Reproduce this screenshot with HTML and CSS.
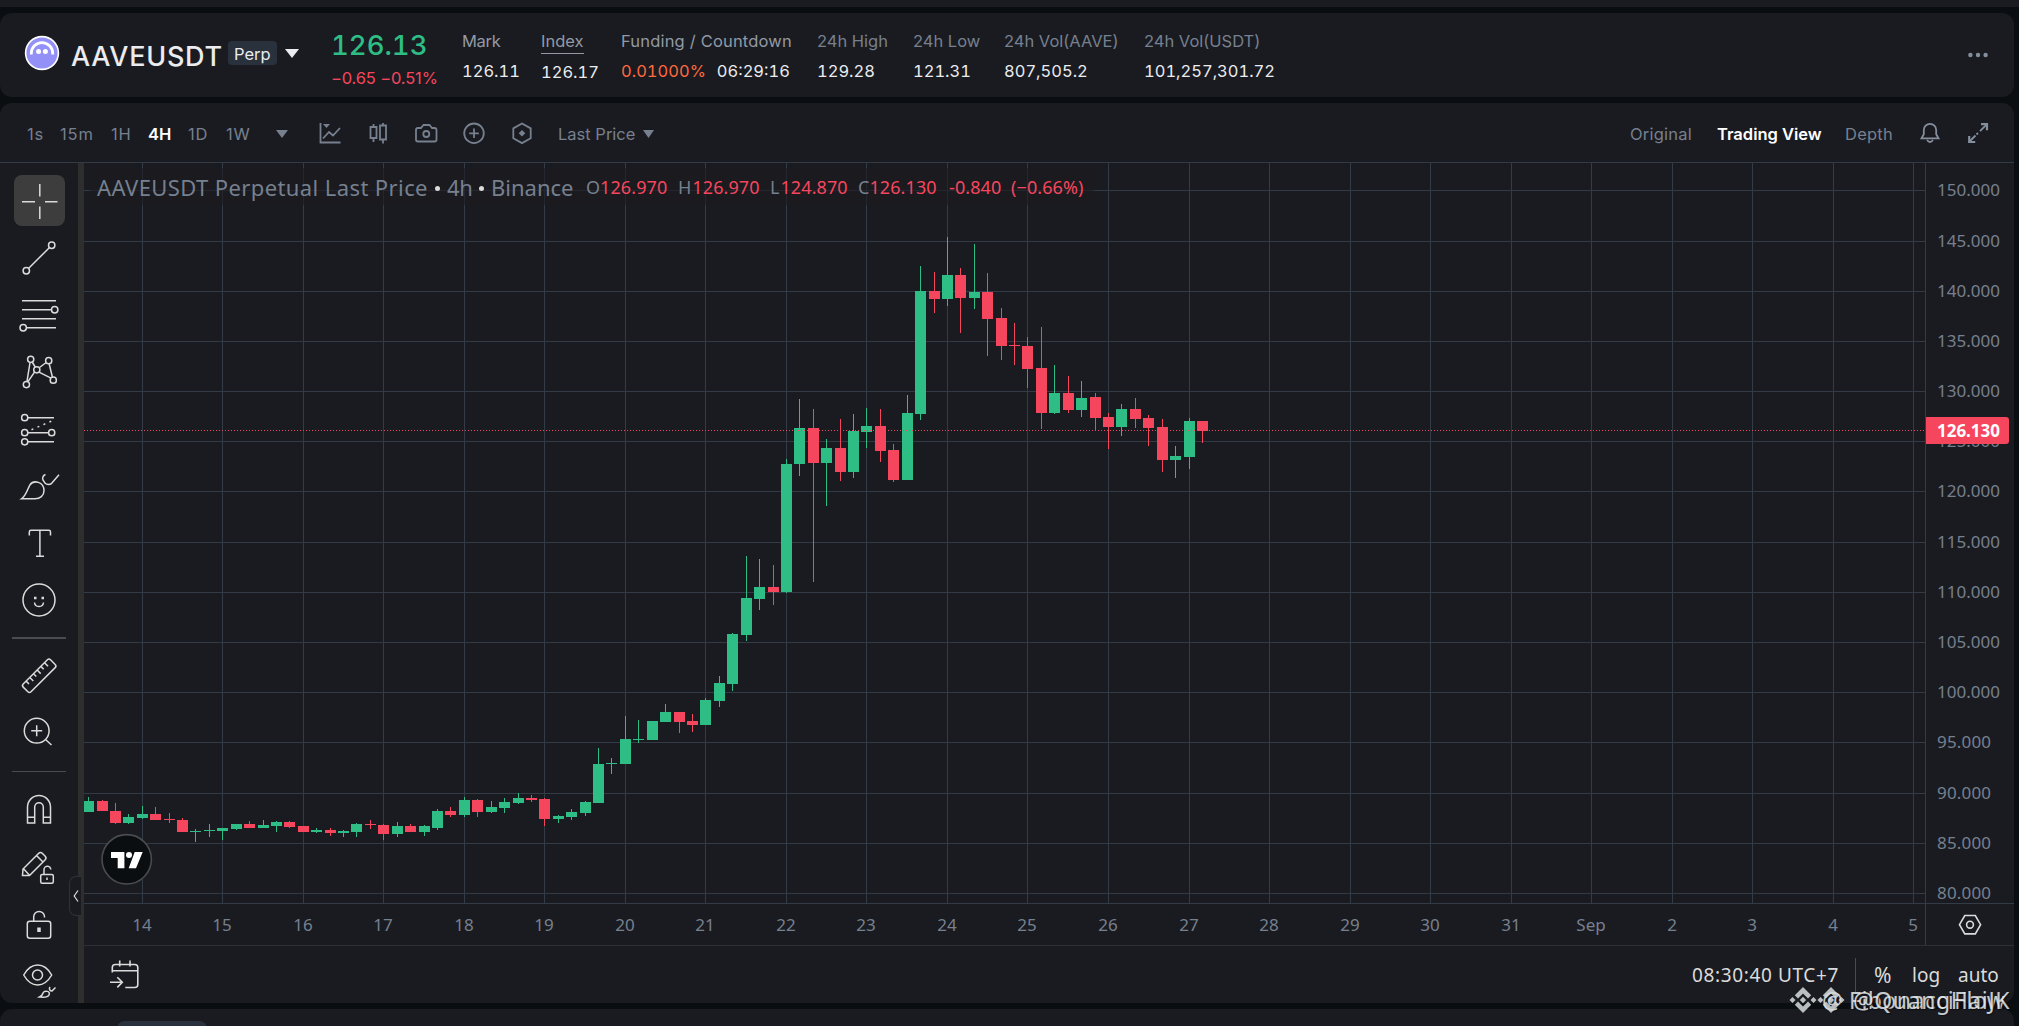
FILE: index.html
```html
<!DOCTYPE html>
<html lang="en">
<head>
<meta charset="utf-8">
<title>AAVEUSDT Perpetual</title>
<link rel="stylesheet" href="styles.css">
</head>
<body>
<div class="page">
  <div class="strip"></div>

  <header class="card ticker">
    <svg class="coin" viewBox="0 0 36 36"><circle cx="18" cy="18" r="16.4" fill="#9391f7" stroke="#fff" stroke-width="1.6"/><path d="M7.3 19.6v-1.2a10.7 10.7 0 0 1 21.4 0v1.2" fill="none" stroke="#fff" stroke-width="2.8"/><circle cx="14.6" cy="16.6" r="2.5" fill="#fff"/><circle cx="21.4" cy="16.6" r="2.5" fill="#fff"/></svg>
    <h1 class="symbol">AAVEUSDT</h1>
    <span class="badge">Perp</span>
    <svg class="caret" viewBox="0 0 14 9"><path d="M0 0h14L7 9z" fill="#eaecef"/></svg>
    <div class="price"><div class="last">126.13</div><div class="change">−0.65 −0.51%</div></div>
    <dl class="stat s-mark"><dt>Mark</dt><dd>126.11</dd></dl>
    <dl class="stat s-index"><dt><span class="underlined">Index</span></dt><dd>126.17</dd></dl>
    <dl class="stat s-fund"><dt>Funding / Countdown</dt><dd><span class="orange">0.01000%</span><span class="count">06:29:16</span></dd></dl>
    <dl class="stat s-high dim"><dt>24h High</dt><dd>129.28</dd></dl>
    <dl class="stat s-low dim"><dt>24h Low</dt><dd>121.31</dd></dl>
    <dl class="stat s-vola dim"><dt>24h Vol(AAVE)</dt><dd>807,505.2</dd></dl>
    <dl class="stat s-volu dim"><dt>24h Vol(USDT)</dt><dd>101,257,301.72</dd></dl>
    <svg class="more" viewBox="0 0 20 6" fill="#848e9c"><circle cx="2.4" cy="3" r="2.2"/><circle cx="10" cy="3" r="2.2"/><circle cx="17.6" cy="3" r="2.2"/></svg>
  </header>

  <main class="card panel">
    <div class="toolbar">
      <nav class="frames"><a class="f1">1s</a><a class="f2">15m</a><a class="f3">1H</a><a class="f4 on">4H</a><a class="f5">1D</a><a class="f6">1W</a></nav>
      <svg class="tri" viewBox="0 0 12 8"><path d="M0 0h12L6 8z" fill="#76808f"/></svg>
      <svg class="tools" viewBox="316 120 220 27" fill="none" stroke="#76808f" stroke-width="1.8">
        <path d="M320.5 123v19.500h20M323 138.500l6-6.500 4 3.500 7-7.500"/><path d="M323 124h7l-3.500 4z" fill="#76808f" stroke="none"/>
        <path d="M373.500 124v3M373.500 138v4M370.500 127h6v11h-6zM383 123v2.500M383 140v3.500M380 125.500h6v14h-6z"/>
        <path d="M416 130q0-2 2-2h3l2.500-3h6l2.500 3h2.500q2 0 2 2v9.500q0 2-2 2h-16.500q-2 0-2-2z"/><circle cx="426.300" cy="134" r="3"/>
        <circle cx="474" cy="133.300" r="9.800"/><path d="M474 128.500v9.600M469.200 133.300h9.600"/>
        <path d="M522 123.500l8.700 4.900v9.800l-8.700 4.900-8.700-4.900v-9.800z"/><path d="M522 130l3.300 3.300-3.300 3.300-3.300-3.300z" fill="#76808f" stroke="none"/>
      </svg>
      <span class="lastprice">Last Price</span>
      <svg class="tri2" viewBox="0 0 11 8"><path d="M0 0h11L5.500 8z" fill="#76808f"/></svg>
      <nav class="views"><a class="v1">Original</a><a class="v2 on">Trading View</a><a class="v3">Depth</a></nav>
      <svg class="actions" viewBox="1918 121 72 25" fill="none" stroke="#848e9c" stroke-width="1.8">
        <path d="M1921.500 138.300h17l-2.300-4v-4.300a6.200 6.200 0 0 0-12.400 0v4.300zM1927 140q3 4 6 0"/>
        <path d="M1981 124.200h6v6M1969.200 136v6h6" stroke-width="2.2"/><path d="M1980 131.200l6-6M1970 141l5.500-5.500M1976.500 134.500l1.500-1.500"/>
      </svg>
    </div>

    <div class="work">
      <aside class="side">
        <button class="tool picked"><svg viewBox="0 173 78 57"><rect x="14" y="175" width="51" height="51" rx="8" fill="#3d3d3d" stroke="none"/><path d="M39.800 184v12.500M39.800 206.500v12.500M22 201.700h13M45 201.700h12.500"/></svg></button>
        <button class="tool"><svg viewBox="0 230 78 57"><circle cx="26.300" cy="270.700" r="3.200"/><circle cx="51.700" cy="245.300" r="3.200"/><path d="M28.700 268.300l20.600-20.600"/></svg></button>
        <button class="tool"><svg viewBox="0 287 78 57"><path d="M22 300.800h34M22 309.800h29.500M22 318.800h34M26.500 327.800h29.500"/><circle cx="54.700" cy="309.700" r="3.200"/><circle cx="23.200" cy="327.800" r="3.200"/></svg></button>
        <button class="tool"><svg viewBox="0 344 78 57"><path d="M27 381.300l3-18.800M32.200 362l3 5M39.500 367.500l6.700-5M49.200 364l3.200 13M39 372.200l12 6M34.500 372.200l-6.500 9.500"/><circle cx="30.700" cy="359.300" r="3.100"/><circle cx="48.700" cy="360.700" r="3.100"/><circle cx="36.800" cy="369.800" r="3.100"/><circle cx="26.400" cy="384.600" r="3.100"/><circle cx="53.300" cy="380.200" r="3.100"/></svg></button>
        <button class="tool"><svg viewBox="0 401 78 57"><circle cx="24.700" cy="417.700" r="3.100"/><circle cx="24.700" cy="432.700" r="3.100"/><circle cx="51.700" cy="432.700" r="3.100"/><circle cx="24.700" cy="441.800" r="3.100"/><path d="M28 417.700h26M28 432.700h20.500M28 441.800h26"/><path d="M31.500 429.700l21-9" stroke-dasharray="2 4.500"/></svg></button>
        <button class="tool"><svg viewBox="0 458 78 57"><path d="M21.500 498.800c5-3.500 6-10 8.500-14 3.500-5 14-3.500 14 6 0 5-4 8-9 8zM45.500 474.500c-2.500 1-3.500 3.500-2.500 5.500l2.200 3.300c1.500 1.500 4.500 1.600 6.500 0l7.300-8.500"/></svg></button>
        <button class="tool"><svg viewBox="0 515 78 57"><path d="M29.300 535.500v-3.500q0-1.700 1.700-1.700h17.800q1.700 0 1.700 1.700v3.500M39.900 530.300v26M36 556.300h8"/></svg></button>
        <button class="tool"><svg viewBox="0 572 78 57"><circle cx="39" cy="600" r="16"/><path d="M34.500 602.500q.5 4 4.500 4t4.500-4"/><path d="M34 598h2.500M41.500 598h2.500" stroke-width="2.500"/></svg></button>
        <hr class="rule thick">
        <button class="tool"><svg viewBox="0 648 78 57"><g transform="translate(39.200 675.800) rotate(-45)"><rect x="-19.300" y="-5.500" width="38.600" height="11" rx="2.200"/><path d="M-13-5.500v4M-7.800-5.500v5M-2.600-5.500v4M2.600-5.500v5M7.800-5.500v4M13-5.500v5"/></g></svg></button>
        <button class="tool"><svg viewBox="0 705 78 57"><circle cx="36.700" cy="730.700" r="12.400"/><path d="M36.700 725.200v11M31.200 730.700h11M45.500 739.500l6 5.500"/></svg></button>
        <hr class="rule">
        <button class="tool"><svg viewBox="0 780 78 57"><path d="M27.500 823v-16a11.500 11.500 0 0 1 23 0v16h-7.200v-16a4.300 4.300 0 0 0-8.600 0v16zM27.500 817.300h7.200M43.300 817.300h7.200"/></svg></button>
        <button class="tool"><svg viewBox="0 837 78 57"><path d="M22.500 875.500l.5-6.500 15.500-15.500q2-2 4 0l2.500 2.500q2 2 0 4l-15.500 15.500zM23.500 868.800l6 6.500M36.500 855.500l6.500 6.500"/><rect x="40.700" y="874.500" width="12.600" height="8.800" rx="1.500"/><path d="M44 874.500v-4.500a3.400 3.400 0 0 1 6.800-.5M47 877.500v2.500"/></svg></button>
        <button class="tool"><svg viewBox="0 894 78 57"><rect x="27.300" y="921.300" width="23.400" height="17" rx="2.500"/><path d="M33.700 921.300v-4.500a5.400 5.400 0 0 1 10.800 0v.7"/><path d="M39 927.500v4.500" stroke-width="3.500"/></svg></button>
        <button class="tool"><svg viewBox="0 951 78 57"><path d="M23.700 975c7.500-13.300 20.500-13.300 28 0-7.500 13.300-20.500 13.300-28 0z"/><circle cx="37.500" cy="975" r="5"/><path d="M39.500 997q3-1.500 3.500-4c1.500-3 8-2 6 2-1.500 3-6 2.300-9.500 2zM50 987c-1.500 2 0 4 2 4l3.500-3.500"/></svg></button>
      </aside>

      <section class="chartbox">
        <svg class="chart" id="chart" viewBox="84 163 1930 782"></svg>
        <div class="legend">
          <span class="title">AAVEUSDT Perpetual Last Price</span><i class="dot"></i><span class="title l4">4h</span><i class="dot"></i><span class="title lb">Binance</span>
          <span class="o o1">O<b>126.970</b></span><span class="o o2">H<b>126.970</b></span><span class="o o3">L<b>124.870</b></span><span class="o o4">C<b>126.130</b></span><span class="o o5"><b>-0.840</b></span><span class="o o6"><b>(−0.66%)</b></span>
        </div>
        <div class="bottom">
          <svg class="calendar" viewBox="109 958 32 32"><path d="M112.300 971.500v-5q0-3 3-3h19.500q3 0 3 3v17q0 3-3 3h-9.500M112.300 969.800h25.500M119.700 959.500v6M130 959.500v6M110 981.300h11.500M117.300 976.200l5 5.100-5 5.100"/></svg>
          <span class="clock">08:30:40 UTC+7</span>
          <i class="split"></i>
          <span class="opt pct">%</span><span class="opt log">log</span><span class="opt auto">auto</span>
        </div>
      </section>
      <div class="fold"><svg viewBox="0 0 6 12"><path d="M5 .5L1.200 6 5 11.500"/></svg></div>
    </div>
  </main>

  <footer class="card next"><div class="chip"></div></footer>

  <div class="mark mark-a"><svg viewBox="-14 -14 28 28"><use href="#bn"/></svg><span class="at">@</span><span class="name">FibonacciFlow</span></div>
  <div class="mark mark-b"><svg viewBox="-14 -14 28 28"><g id="bn"><path d="M-8.200-4.800L0-13l8.200 8.200-3.200 3.200-5-5-5 5zM-8.200 4.800L0 13l8.200-8.200-3.200-3.200-5 5-5-5zM0-3.200L3.200 0 0 3.200-3.200 0zM-10.500-3l3 3-3 3-3-3zM10.500-3l3 3-3 3-3-3z"/></g></svg><span class="name">@QuangHaiJK</span></div>
</div>
<script src="script.js"></script>
</body>
</html>
```
FILE: styles.css
```css
* { box-sizing: border-box; }
body { margin: 0; background: #0b0e11; color: #eaecef; font-family: Inter, "Liberation Sans", sans-serif; font-size: 16.5px; overflow: hidden; }
svg { display: block; flex: none; }
.page { position: relative; width: 2019px; height: 1026px; overflow: hidden; display: flex; flex-direction: column; gap: 6px; }
.strip { flex: 0 0 7px; background: #1a1b20; }
.card { width: 2014px; background: #1a1b20; border-radius: 12px; flex: none; }

.ticker { height: 84px; display: flex; align-items: flex-start; padding-left: 24px; }
.coin { width: 36px; height: 36px; margin-top: 22px; }
.symbol { width: 156px; margin: 28px 0 0 11px; font-size: 27px; line-height: 32px; font-weight: 500; letter-spacing: .75px; white-space: nowrap; }
.badge { width: 49px; height: 24px; margin: 28px 0 0 1px; padding-left: 6px; border-radius: 4px; background: #29313d; font-size: 16.5px; line-height: 26px; }
.caret { width: 14px; height: 9px; margin: 36px 32px 0 8px; }
.price { width: 131px; white-space: nowrap; }
.last { margin-top: 17px; color: #2ebd85; font-size: 27.5px; line-height: 30px; font-weight: 500; font-variant-numeric: tabular-nums; }
.change { margin-top: 8px; color: #f6465d; line-height: 20px; letter-spacing: -.15px; }
.stat { margin: 18px 0 0; white-space: nowrap; line-height: 20px; }
.stat dt { color: #9299a5; height: 20px; }
.stat dd { margin: 10px 0 0; font-variant-numeric: tabular-nums; }
.dim dt { color: #76808f; }
.s-mark { width: 79px; }
.s-mark dt { letter-spacing: -.3px; }
.s-index { width: 80px; }
.s-index dd { margin-top: 11px; }
.underlined { display: inline-block; height: 23px; border-bottom: 1px solid #9299a5; }
.s-fund { width: 196px; }
.s-fund dt { letter-spacing: .18px; }
.orange { color: #ff693d; }
.count { position: relative; margin-left: 11px; }
.s-high { width: 96px; }
.s-low { width: 91px; }
.s-vola { width: 140px; }
.more { width: 20px; height: 6px; margin: 39px 26px 0 auto; }

.panel { height: 900px; overflow: hidden; display: flex; flex-direction: column; }
.toolbar { height: 60px; flex: none; display: flex; align-items: center; padding: 2px 24px 0 27px; border-bottom: 1px solid #333b47; color: #76808f; white-space: nowrap; }
.frames, .views { display: flex; }
.frames { letter-spacing: .9px; }
.on { color: #fff; font-weight: 600; letter-spacing: 0; }
.f1 { width: 33px; } .f2 { width: 51px; } .f3 { width: 37px; } .f4 { width: 40px; } .f5 { width: 38px; } .f6 { width: 50px; }
.tri { width: 12px; height: 8px; }
.tools { width: 220px; height: 27px; margin-left: 28px; }
.lastprice { width: 85px; margin-left: 22px; }
.tri2 { width: 11px; height: 8px; }
.views { margin-left: auto; }
.v1 { width: 87px; letter-spacing: .22px; } .v2 { width: 128px; } .v3 { width: 73px; letter-spacing: .24px; }
.actions { width: 72px; height: 25px; }

.work { position: relative; display: flex; height: 840px; }
.side { width: 84px; flex: none; padding-top: 10px; border-right: 6px solid #2e2e2e; overflow: hidden; }
.tool { display: block; width: 78px; height: 57px; margin: 0; padding: 0; border: 0; background: none; }
.tool svg { width: 78px; height: 57px; fill: none; stroke: #dbdbdb; stroke-width: 1.5; }
.rule { width: 54px; height: 1px; margin: 9px 0 8px 12px; border: 0; background: #4a4b4f; }
.rule.thick { height: 2px; margin: 8px 0 9px 12px; }
.chartbox { position: relative; width: 1930px; }
.chart { width: 1930px; height: 782px; font-family: "Noto Sans", sans-serif; }
.legend { position: absolute; left: 6px; top: 5px; width: 1004px; height: 37px; padding-left: 7px; background: rgba(26, 27, 32, .6); display: flex; align-items: center; font-family: "Noto Sans", sans-serif; color: #76808f; white-space: nowrap; }
.title { width: 331px; font-size: 22px; line-height: 38px; letter-spacing: .4px; }
.dot { width: 5px; height: 5px; margin: 3px 7px 0 7px; border-radius: 50%; background: #dbdbdb; }
.l4 { width: 25px; letter-spacing: -.4px; }
.lb { width: 95px; letter-spacing: 0; }
.o { display: flex; font-size: 18px; line-height: 36px; }
.o b { color: #f6465d; font-weight: 400; letter-spacing: .1px; }
.o1, .o2 { width: 92px; } .o3 { width: 88px; } .o4 { width: 91px; } .o5 { width: 62px; }
.o2, .o3 { gap: 1px; }
.bottom { height: 58px; border-top: 1px solid #2e3035; display: flex; align-items: center; padding: 0 14px 0 25px; font-family: "Noto Sans", sans-serif; font-size: 19px; color: #dbdbdb; }
.calendar { width: 32px; height: 32px; fill: none; stroke: #dbdbdb; stroke-width: 1.6; }
.clock { width: 163px; margin-left: auto; white-space: nowrap; letter-spacing: .63px; }
.split { width: 1px; height: 34px; background: #4a4b4f; margin-right: 18px; }
.pct { width: 38px; font-size: 21px; } .log { width: 46px; } .auto { width: 42px; }
.fold { position: absolute; left: 69px; top: 713px; width: 12px; height: 40px; border: 1px solid #303136; border-right: 0; border-radius: 7px 0 0 7px; background: #1a1b20; }
.fold svg { width: 6px; height: 12px; margin: 13px 0 0 3px; fill: none; stroke: #dbdbdb; stroke-width: 1.2; }

.next { height: 40px; padding-left: 117px; }
.chip { width: 90px; height: 30px; margin-top: 12px; display: inline-block; border-radius: 8px; background: #29313d; }

.mark { position: absolute; display: flex; align-items: center; height: 30px; top: 985px; white-space: nowrap; color: #e6eaec; fill: #d6dcdd; opacity: .85; font-family: "Noto Sans", sans-serif; font-size: 23px; text-shadow: 1px 1px 1px #0b0e11; }
.mark svg { width: 28px; height: 28px; }
.mark-a { left: 1789px; }
.mark-b { left: 1817px; }
.at { width: 27px; margin-left: 5px; }
.name { letter-spacing: .45px; }
.mark-b .name { margin-left: 8px; letter-spacing: .6px; }
```
FILE: script.js
```js
const GRID = '#333b47', UP = '#2ebd85', DOWN = '#f6465d', LABEL = '#76808f';
const days = [[142,'14'],[222,'15'],[303,'16'],[383,'17'],[464,'18'],[544,'19'],[625,'20'],[705,'21'],[786,'22'],[866,'23'],[947,'24'],[1027,'25'],[1108,'26'],[1189,'27'],[1269,'28'],[1350,'29'],[1430,'30'],[1511,'31'],[1591,'Sep'],[1672,'2'],[1752,'3'],[1833,'4'],[1913,'5']];
const rows = [[190,150],[241,145],[291,140],[341,135],[391,130],[441,125],[491,120],[542,115],[592,110],[642,105],[692,100],[742,95],[793,90],[843,85],[893,80]];
// centre x, body top, body bottom, high, low, 1 = rising
const candles = [
[88,801,812,797,812,1],[102,801,811,800,811,0],[115,811,823,803,824,0],[128,817,823,814,824,1],[142,814,818,806,819,1],[155,814,820,807,820,0],[169,819,820,813,823,0],[182,820,832,818,832,0],[195,831,832,829,842,1],[209,830,831,824,837,1],
[222,828,831,828,840,1],[236,824,829,824,830,1],[249,824,828,821,828,0],[263,825,828,820,828,1],[276,822,826,821,832,1],[289,822,827,821,828,0],[303,826,832,826,832,0],[316,830,832,828,833,1],[330,830,833,828,836,0],[343,831,833,830,837,1],
[356,824,832,823,837,1],[370,824,825,820,829,0],[383,825,834,824,840,0],[397,826,834,822,837,1],[410,826,832,824,832,0],[424,826,832,825,836,1],[437,811,828,809,830,1],[450,811,815,807,817,0],[464,800,815,797,817,1],[477,800,812,799,817,0],
[491,807,812,801,813,1],[504,802,808,798,813,1],[518,798,803,793,804,1],[531,798,800,795,802,0],[544,799,819,798,826,0],[558,816,819,815,823,1],[571,812,817,809,820,1],[585,802,813,801,816,1],[598,764,803,748,803,1],[611,763,764,758,774,1],
[625,739,764,716,764,1],[638,739,740,720,743,1],[652,721,740,721,740,1],[665,712,722,704,722,1],[679,712,722,712,733,0],[692,721,725,714,732,0],[705,700,725,698,725,1],[719,683,701,676,707,1],[732,634,684,633,691,1],[746,598,635,556,641,1],
[759,587,599,559,610,1],[773,587,592,565,605,0],[786,464,592,459,593,1],[799,428,464,399,476,1],[813,428,463,409,582,0],[826,448,463,439,506,1],[840,448,472,419,481,0],[853,431,472,414,478,1],[866,426,432,408,448,1],[880,426,451,409,462,0],
[893,450,480,444,482,0],[907,413,480,395,480,1],[920,291,414,266,420,1],[934,291,299,272,313,0],[947,275,299,237,306,1],[960,275,298,268,333,0],[974,292,298,244,309,1],[987,292,319,273,356,0],[1001,318,346,308,360,0],[1014,345,346,323,365,0],
[1027,346,369,337,388,0],[1041,368,413,327,429,0],[1054,393,413,365,414,1],[1068,393,410,376,413,0],[1081,398,410,381,417,1],[1095,397,418,393,431,0],[1108,417,427,413,449,0],[1121,409,427,404,436,1],[1135,409,419,398,428,0],[1148,418,428,415,446,0],
[1162,427,460,419,472,0],[1175,456,460,446,478,1],[1189,421,457,418,469,1],[1202,421,431,421,443,0]];

const rect = (x, y, w, h, f) => `<rect x="${x}" y="${y}" width="${w}" height="${h}" fill="${f}"/>`;
let s = '';
for (const [x] of days) s += rect(x, 163, 1, 740, GRID);
for (const [y] of rows) s += rect(84, y, 1841, 1, GRID);
s += rect(84, 903, 1930, 1, GRID) + rect(1925, 163, 1, 782, GRID);
for (const [x, t, b, h, l, up] of candles) {
  const c = up ? UP : DOWN;
  s += rect(x, h, 1, l - h, c) + rect(x - 5, t, 11, b - t, c);
}
s += '<path d="M84 430.5H1925" stroke="#f6465d" stroke-dasharray="1 2"/>';
for (const [x, d] of days) s += `<text x="${x}" y="930.7" text-anchor="middle" font-size="17" fill="${LABEL}">${d}</text>`;
for (const [y, p] of rows) s += `<text x="1937" y="${y + 5.8}" font-size="17" textLength="${p > 99 ? 63 : 54}" fill="${LABEL}">${p}.000</text>`;
s += '<path d="M1926 417h80q3 0 3 3v21q0 3-3 3h-80z" fill="#f6465d"/><text x="1937" y="436.7" font-size="17" font-weight="700" textLength="63" fill="#fff">126.130</text>';
s += '<g transform="translate(126.7 859.3)"><circle r="24.7" fill="#0b0e11" stroke="#4a4b4f" stroke-width="1.6"/><path d="M-15.7-7.300h13.400v16.300h-6.700v-10.300h-6.700zM8-7.300h8l-6.700 16.300h-7.300z" fill="#fff"/><circle cx="2.300" cy="-4.300" r="3" fill="#fff"/></g>';
s += '<g fill="none" stroke="#dbdbdb" stroke-width="1.6"><path d="M1959.500 924.700l5.300-9.200h10.500l5.300 9.200-5.300 9.200h-10.500z"/><circle cx="1970" cy="924.700" r="3.400"/></g>';
document.getElementById('chart').innerHTML = s;
```
